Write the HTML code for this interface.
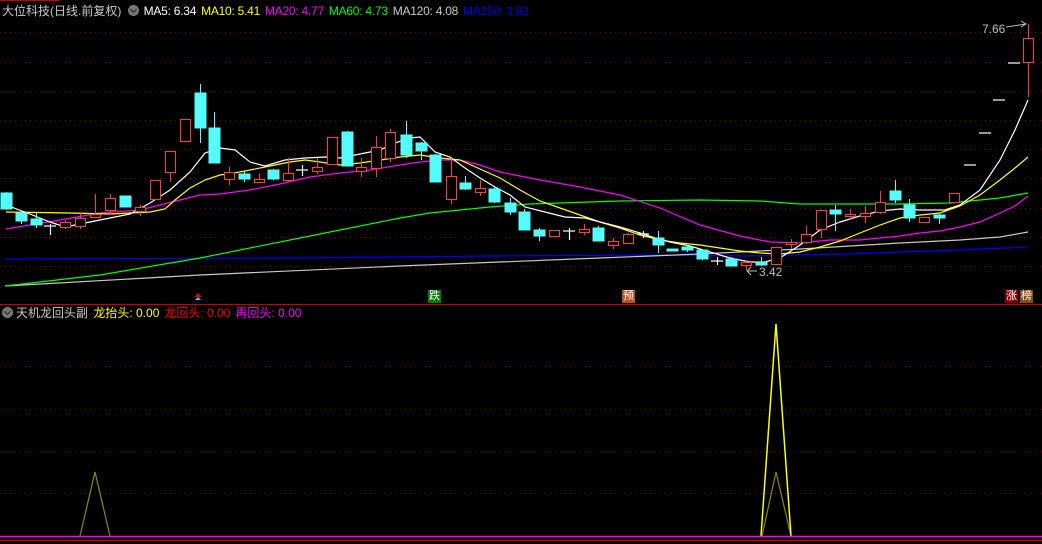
<!DOCTYPE html>
<html><head><meta charset="utf-8"><style>
html,body{margin:0;padding:0;background:#000;}
body{width:1042px;height:544px;overflow:hidden;position:relative;font-family:"Liberation Sans","Noto Sans CJK SC",sans-serif;}
.t{position:absolute;font-size:12px;white-space:nowrap;line-height:14px;}
.t span{margin-right:5px;}
.m span{letter-spacing:-0.25px;margin-right:5px;}
.ic{display:inline-block;width:11px;height:11px;border-radius:50%;background:#777;vertical-align:-1px;margin-right:4px;position:relative;}
.ic:after{content:"";position:absolute;left:3px;top:2px;width:4px;height:4px;border-right:1.5px solid #222;border-bottom:1.5px solid #222;transform:rotate(45deg);}
.mk{position:absolute;font-size:11px;width:13px;height:13px;line-height:13px;text-align:center;color:#fff;}
</style></head><body>
<svg width="1042" height="544" style="position:absolute;left:0;top:0" xmlns="http://www.w3.org/2000/svg">
<g stroke="#8a0000" stroke-dasharray="1,4" stroke-width="1">
<line x1="0" y1="32.5" x2="1042" y2="32.5"/><line x1="0" y1="62.5" x2="1042" y2="62.5"/><line x1="0" y1="91.5" x2="1042" y2="91.5"/><line x1="0" y1="120.5" x2="1042" y2="120.5"/><line x1="0" y1="149.5" x2="1042" y2="149.5"/><line x1="0" y1="178.5" x2="1042" y2="178.5"/><line x1="0" y1="208.5" x2="1042" y2="208.5"/><line x1="0" y1="237.5" x2="1042" y2="237.5"/><line x1="0" y1="266.5" x2="1042" y2="266.5"/>
<line x1="0" y1="366.5" x2="1042" y2="366.5"/><line x1="0" y1="409.5" x2="1042" y2="409.5"/><line x1="0" y1="451.5" x2="1042" y2="451.5"/><line x1="0" y1="493.5" x2="1042" y2="493.5"/>
</g>
<line x1="0" y1="0.5" x2="60" y2="0.5" stroke="#c00"/>
<line x1="0" y1="304.5" x2="1042" y2="304.5" stroke="#c00"/>
<line x1="0" y1="540.5" x2="1042" y2="540.5" stroke="#c00" stroke-width="1.5"/>
<g fill="none" stroke-width="1.2">
<polyline stroke="#0000ff" points="5,259 300,258 490,256 660,255 740,256 850,254 900,252 960,250 1028,247"/>
<polyline stroke="#c8c8c8" points="5,286 200,275 400,266 600,258 700,254 760,251 800,249 850,246 900,243 960,240 1000,237 1028,232"/>
<polyline stroke="#00ff00" points="5,286 100,275 200,258 300,238 400,218 430,213 490,207 530,204 560,203 620,201 700,200 760,201 800,204 840,204 900,204 950,203 980,200 1000,198 1028,193"/>
<polyline stroke="#ff00ff" points="6,229 30,225 60,220 100,213 140,210 160,205 180,200 200,195 220,194 250,190 280,184 310,177 340,173 370,170 400,165 420,162 440,160 460,160 480,165 500,172 540,180 580,187 620,195 660,208 700,225 740,236 770,242 800,243 830,240 860,240 880,238 900,236 920,233 940,231 960,227 980,222 1000,213 1015,206 1028,196"/>
<polyline stroke="#ffff00" points="6,212 70,213 110,214 150,212 165,209 175,200 190,188 205,180 220,175 240,172 250,170 270,166 290,162 305,160 320,162 340,165 360,163 380,160 400,157 420,155 440,158 460,160 480,169 500,178 520,190 540,201 560,208 580,215 600,222 620,228 640,235 660,240 680,243 700,245 720,248 740,251 760,253 780,254 800,252 820,247 840,241 860,233 880,225 900,218 920,215 940,213 960,206 980,195 1000,180 1015,168 1028,157"/>
<polyline stroke="#ffffff" points="6,205 30,214 50,222 65,227 80,224 100,220 130,214 150,203 170,190 190,172 205,153 220,148 235,150 250,162 265,166 285,160 305,158 325,157 340,158 360,154 380,150 395,143 410,138 420,137 435,152 450,157 465,168 480,178 495,187 510,195 525,207 545,212 565,217 585,218 600,222 620,227 640,233 655,238 670,242 690,246 710,252 730,258 750,262 765,262 780,258 800,245 820,230 840,222 860,216 880,211 900,209 920,210 945,210 960,205 980,190 1000,160 1015,130 1028,100"/>
</g>
<g>
<g stroke="#54fcfc" fill="#54fcfc" stroke-width="1">
<line x1="6.5" y1="192" x2="6.5" y2="210"/><rect x="1" y="193" width="11" height="16"/>
<line x1="21.5" y1="211" x2="21.5" y2="224"/><rect x="16" y="213" width="11" height="8"/>
<line x1="36.5" y1="213" x2="36.5" y2="228"/><rect x="31" y="219" width="11" height="6"/>
<rect x="120" y="196" width="11" height="11"/>
<line x1="200.5" y1="84" x2="200.5" y2="143"/><rect x="195" y="93" width="11" height="35"/>
<line x1="214.5" y1="112" x2="214.5" y2="163"/><rect x="209" y="128" width="11" height="35"/>
<line x1="244.5" y1="171" x2="244.5" y2="182"/><rect x="239" y="174" width="11" height="5"/>
<line x1="273.5" y1="169" x2="273.5" y2="180"/><rect x="268" y="170" width="11" height="9"/>
<line x1="347.5" y1="131" x2="347.5" y2="166"/><rect x="342" y="132" width="11" height="34"/>
<line x1="406.5" y1="121" x2="406.5" y2="158"/><rect x="401" y="135" width="11" height="20"/>
<line x1="421.5" y1="142" x2="421.5" y2="160"/><rect x="416" y="143" width="11" height="8"/>
<line x1="435.5" y1="154" x2="435.5" y2="182"/><rect x="430" y="155" width="11" height="27"/>
<line x1="465.5" y1="176" x2="465.5" y2="190"/><rect x="460" y="183" width="11" height="6"/>
<line x1="494.5" y1="186" x2="494.5" y2="203"/><rect x="489" y="189" width="11" height="13"/>
<line x1="510.5" y1="198" x2="510.5" y2="215"/><rect x="505" y="203" width="11" height="9"/>
<line x1="524.5" y1="209" x2="524.5" y2="230"/><rect x="519" y="212" width="11" height="18"/>
<line x1="539.5" y1="228" x2="539.5" y2="241"/><rect x="534" y="230" width="11" height="6"/>
<line x1="598.5" y1="226" x2="598.5" y2="241"/><rect x="593" y="228" width="11" height="13"/>
<line x1="658.5" y1="231" x2="658.5" y2="253"/><rect x="653" y="238" width="11" height="7"/>
<rect x="667" y="249" width="11" height="2"/>
<line x1="687.5" y1="245" x2="687.5" y2="252"/><rect x="682" y="247" width="11" height="3"/>
<line x1="702.5" y1="249" x2="702.5" y2="260"/><rect x="697" y="250" width="11" height="9"/>
<line x1="731.5" y1="257" x2="731.5" y2="266"/><rect x="726" y="259" width="11" height="7"/>
<line x1="761.5" y1="257" x2="761.5" y2="266"/><rect x="756" y="262" width="11" height="3"/>
<line x1="835.5" y1="205" x2="835.5" y2="231"/><rect x="830" y="210" width="11" height="4"/>
<line x1="895.5" y1="180" x2="895.5" y2="203"/><rect x="890" y="191" width="11" height="9"/>
<line x1="909.5" y1="199" x2="909.5" y2="222"/><rect x="904" y="205" width="11" height="13"/>
<line x1="939.5" y1="213" x2="939.5" y2="224"/><rect x="934" y="215" width="11" height="3"/>
</g>
<g stroke="#ff3b3b" fill="#000" stroke-width="1">
<line x1="65.5" y1="220" x2="65.5" y2="229"/><rect x="60.5" y="222.5" width="10" height="5"/>
<line x1="80.5" y1="212" x2="80.5" y2="229"/><rect x="75.5" y="218.5" width="10" height="8"/>
<line x1="95.5" y1="194" x2="95.5" y2="218"/><rect x="90.5" y="214.5" width="10" height="3"/>
<line x1="110.5" y1="194" x2="110.5" y2="215"/><rect x="105.5" y="198.5" width="10" height="12"/>
<line x1="140.5" y1="205" x2="140.5" y2="216"/><rect x="135.5" y="207.5" width="10" height="4"/>
<rect x="150.5" y="180.5" width="10" height="19"/>
<line x1="170.5" y1="172" x2="170.5" y2="182"/><rect x="165.5" y="151.5" width="10" height="21"/>
<rect x="180.5" y="119.5" width="10" height="22"/>
<line x1="229.5" y1="167" x2="229.5" y2="185"/><rect x="224.5" y="172.5" width="10" height="7"/>
<line x1="259.5" y1="174" x2="259.5" y2="183"/><rect x="254.5" y="179.5" width="10" height="3"/>
<line x1="288.5" y1="158" x2="288.5" y2="182"/><rect x="283.5" y="173.5" width="10" height="7"/>
<line x1="317.5" y1="158" x2="317.5" y2="174"/><rect x="312.5" y="167.5" width="10" height="4"/>
<rect x="327.5" y="137.5" width="10" height="27"/>
<line x1="361.5" y1="158" x2="361.5" y2="177"/><rect x="356.5" y="167.5" width="10" height="4"/>
<line x1="376.5" y1="136" x2="376.5" y2="177"/><rect x="371.5" y="147.5" width="10" height="21"/>
<line x1="390.5" y1="129" x2="390.5" y2="162"/><rect x="385.5" y="132.5" width="10" height="26"/>
<line x1="451.5" y1="158" x2="451.5" y2="204"/><rect x="446.5" y="176.5" width="10" height="23"/>
<line x1="480.5" y1="180" x2="480.5" y2="196"/><rect x="475.5" y="188.5" width="10" height="4"/>
<rect x="549.5" y="230.5" width="10" height="6"/>
<line x1="584.5" y1="224" x2="584.5" y2="235"/><rect x="579.5" y="229.5" width="10" height="3"/>
<line x1="613.5" y1="238" x2="613.5" y2="249"/><rect x="608.5" y="241.5" width="10" height="4"/>
<line x1="628.5" y1="233" x2="628.5" y2="243"/><rect x="623.5" y="234.5" width="10" height="9"/>
<line x1="746.5" y1="260" x2="746.5" y2="270"/><rect x="741.5" y="262.5" width="10" height="3"/>
<rect x="771.5" y="247.5" width="10" height="17"/>
<line x1="791.5" y1="239" x2="791.5" y2="249"/><rect x="786.5" y="242.5" width="10" height="2"/>
<line x1="806.5" y1="226" x2="806.5" y2="244"/><rect x="801.5" y="234.5" width="10" height="8"/>
<line x1="821.5" y1="229" x2="821.5" y2="238"/><rect x="816.5" y="210.5" width="10" height="19"/>
<line x1="850.5" y1="209" x2="850.5" y2="219"/><rect x="845.5" y="214.5" width="10" height="2"/>
<line x1="865.5" y1="206" x2="865.5" y2="223"/><rect x="860.5" y="213.5" width="10" height="3"/>
<line x1="880.5" y1="191" x2="880.5" y2="214"/><rect x="875.5" y="202.5" width="10" height="10"/>
<rect x="919.5" y="217.5" width="10" height="5"/>
<rect x="949.5" y="193.5" width="10" height="9"/>
<line x1="1028.5" y1="24" x2="1028.5" y2="97"/><rect x="1023.5" y="38.5" width="10" height="24"/>
</g>
<g stroke="#fff" stroke-width="1.2">
<line x1="44" y1="226" x2="56" y2="226"/><line x1="50.5" y1="224" x2="50.5" y2="235"/>
<line x1="296" y1="170" x2="308" y2="170"/><line x1="302.5" y1="165" x2="302.5" y2="176"/>
<line x1="563" y1="231" x2="575" y2="231"/><line x1="569.5" y1="228" x2="569.5" y2="240"/>
<line x1="637" y1="234" x2="649" y2="234"/><line x1="643.5" y1="231" x2="643.5" y2="238"/>
<line x1="711" y1="261" x2="723" y2="261"/><line x1="717.5" y1="257" x2="717.5" y2="265"/>
<line x1="964" y1="165" x2="976" y2="165"/><line x1="979" y1="133" x2="991" y2="133"/><line x1="993" y1="100" x2="1005" y2="100"/><line x1="1008" y1="63" x2="1020" y2="63"/>
</g>
</g>
<g stroke="#bbb" fill="none"><line x1="1006" y1="27" x2="1026" y2="24"/><polyline points="1021,21 1026,24 1021,27"/>
<line x1="747" y1="271" x2="757" y2="271"/><polyline points="751,267 747,271 751,275"/></g>
<polygon points="198,293 194,297 202,297" fill="#e00"/><polygon points="198,297 195,300 201,300" fill="#3cf"/>
<g fill="none">
<polyline stroke="#8a8a00" stroke-width="1.2" points="80,536 95,472 110,536"/>
<polyline stroke="#8a8a00" stroke-width="1.2" points="762,536 776,472 791,536"/>
<polyline stroke="#ffff00" stroke-width="1.5" points="761,536 776,324 791,536"/>
</g>
<line x1="0" y1="536.5" x2="1042" y2="536.5" stroke="#ff00ff" stroke-width="1.5"/>
</svg>
<div class="t m" style="left:2px;top:4px;color:#c8c8c8;">大位科技(日线.前复权) <span class="ic" style="margin-left:3px"></span><span style="color:#fff">MA5: 6.34</span><span style="color:#ff0">MA10: 5.41</span><span style="color:#f0f">MA20: 4.77</span><span style="color:#0f0">MA60: 4.73</span><span style="color:#c8c8c8">MA120: 4.08</span><span style="color:#00f">MA250: 3.82</span></div>
<div class="t" style="left:2px;top:306px;color:#c8c8c8;"><span class="ic" style="margin-right:3px"></span>天机龙回头副 <span style="color:#ff0;margin-left:2px">龙抬头: 0.00</span><span style="color:#f00">龙回头: 0.00</span><span style="color:#f0f">再回头: 0.00</span></div>
<div class="t" style="left:982px;top:22px;color:#bbb;">7.66</div>
<div class="t" style="left:759px;top:265px;color:#bbb;">3.42</div>
<div class="mk" style="left:428px;top:290px;background:#0a7a0a;">跌</div>
<div class="mk" style="left:622px;top:290px;background:#c0501a;">预</div>
<div class="mk" style="left:1005px;top:290px;background:#8a0000;">涨</div>
<div class="mk" style="left:1020px;top:290px;background:#8a4a10;">榜</div>
</body></html>
